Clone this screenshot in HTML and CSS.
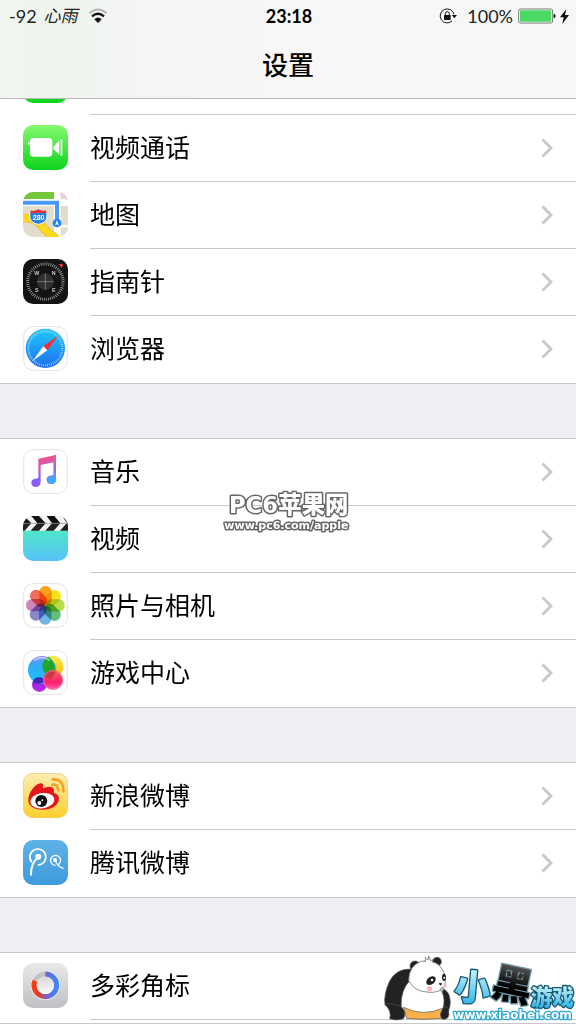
FILE: index.html
```html
<!DOCTYPE html>
<html lang="zh-CN">
<head>
    <meta charset="UTF-8">
    <meta name="viewport" content="width=device-width, initial-scale=1.0">
    <title>设置</title>
    <link rel="stylesheet" href="styles.css">
</head>
<body>
    <svg class="defs" aria-hidden="true">
        <defs>
            <linearGradient id="green" x1="0" y1="0" x2="0" y2="1"><stop offset="0" stop-color="#86f96f"/><stop offset="1" stop-color="#0cd31c"/></linearGradient>
            <linearGradient id="safari" x1="0" y1="0" x2="0" y2="1"><stop offset="0" stop-color="#1fc8f8"/><stop offset="1" stop-color="#1e6ff1"/></linearGradient>
            <linearGradient id="music" x1="0" y1="0" x2="0.2" y2="1"><stop offset="0" stop-color="#ff5265"/><stop offset="0.5" stop-color="#c85bc8"/><stop offset="0.8" stop-color="#7c62ff"/><stop offset="1" stop-color="#a159fb"/></linearGradient>
            <linearGradient id="musicRight" x1="0" y1="0" x2="0" y2="1"><stop offset="0" stop-color="#fb5b70"/><stop offset="0.5" stop-color="#9b6bdc"/><stop offset="0.85" stop-color="#3fa9fb"/></linearGradient>
            <linearGradient id="clap" x1="0" y1="0" x2="0" y2="1"><stop offset="0.3" stop-color="#4ee8c4"/><stop offset="1" stop-color="#57c2fb"/></linearGradient>
            <linearGradient id="bubbleBlue" x1="0" y1="0" x2="0" y2="1"><stop offset="0" stop-color="#8b8cf5"/><stop offset="0.3" stop-color="#35a9fa"/><stop offset="1" stop-color="#17c5fb"/></linearGradient>
            <linearGradient id="bubblePink" x1="0" y1="0" x2="0" y2="1"><stop offset="0" stop-color="#fb6a62"/><stop offset="0.6" stop-color="#fd1f6c"/><stop offset="1" stop-color="#ff5fb4"/></linearGradient>
            <linearGradient id="bubbleYellow" x1="0" y1="0" x2="0" y2="1"><stop offset="0" stop-color="#f5ee5a"/><stop offset="1" stop-color="#f8b500"/></linearGradient>
            <linearGradient id="bubblePurple" x1="0" y1="0" x2="0" y2="1"><stop offset="0" stop-color="#8b22c8"/><stop offset="1" stop-color="#c128fb"/></linearGradient>
            <linearGradient id="sina" x1="0" y1="0" x2="0" y2="1"><stop offset="0" stop-color="#fbeeb4"/><stop offset="1" stop-color="#fecf2b"/></linearGradient>
            <linearGradient id="tencent" x1="0" y1="0" x2="0" y2="1"><stop offset="0" stop-color="#5fb2e6"/><stop offset="1" stop-color="#3f9bdc"/></linearGradient>
            <linearGradient id="silver" x1="0" y1="0" x2="0" y2="1"><stop offset="0" stop-color="#e9e9ea"/><stop offset="1" stop-color="#bfc0c3"/></linearGradient>
            <linearGradient id="ring" x1="0" y1="0" x2="1" y2="0"><stop offset="0" stop-color="#fb3c10"/><stop offset="0.25" stop-color="#d8403c"/><stop offset="0.6" stop-color="#6a6bd8"/><stop offset="1" stop-color="#3f86fb"/></linearGradient>
            <linearGradient id="knob" x1="0" y1="0" x2="0" y2="1"><stop offset="0" stop-color="#d9d9db"/><stop offset="1" stop-color="#fafafa"/></linearGradient>
            <linearGradient id="ice" x1="0" y1="0" x2="0" y2="1"><stop offset="0.2" stop-color="#c8f4ff"/><stop offset="1" stop-color="#1cabe2"/></linearGradient>
            <linearGradient id="coal" x1="0" y1="0" x2="0" y2="1"><stop offset="0.2" stop-color="#555"/><stop offset="0.6" stop-color="#000"/></linearGradient>
            <clipPath id="tile"><rect width="135" height="135" rx="30"/></clipPath>
            <symbol id="chevron" viewBox="0 0 12 20"><path d="M1.500 1.500 10 10 1.500 18.500" fill="none" stroke="#c7c7cc" stroke-width="2.800"/></symbol>
        </defs>
    </svg>

    <div class="screen">
        <header class="topbar">
            <div class="status">
                <div class="status-left">
                    <span class="signal">-92</span>
                    <span class="carrier">心雨</span>
                    <svg class="wifi" width="20" height="16" viewBox="0 0 60 48">
                        <path d="M4 16Q30-7 56 16" fill="none" stroke="#b5b7b5" stroke-width="6"/>
                        <path d="M12 25Q30 9 48 25" fill="none" stroke="#111" stroke-width="7"/>
                        <path d="M19 34Q30 23 41 34L30 45Z" fill="#111"/>
                    </svg>
                </div>
                <time class="clock">23:18</time>
                <div class="status-right">
                    <svg class="lock" width="20" height="16" viewBox="0 0 60 48">
                        <path d="M42 39A21 21 0 1 1 48 19" fill="none" stroke="#111" stroke-width="3"/>
                        <path d="M41 21H57L49 31Z" fill="#111"/>
                        <rect x="18" y="21" width="20" height="15" rx="2" fill="#111"/>
                        <path d="M22 22V17a6 6 0 0 1 12 0v5" fill="none" stroke="#111" stroke-width="3"/>
                    </svg>
                    <span class="percent">100%</span>
                    <svg class="battery" width="38" height="16" viewBox="0 0 114 48">
                        <rect x="2" y="3" width="102" height="42" rx="6" fill="#fff" stroke="#777" stroke-width="3"/>
                        <rect x="6" y="7" width="94" height="34" rx="2" fill="#4cd964"/>
                        <path d="M107 17q6 1 6 7t-6 7z" fill="#111"/>
                    </svg>
                    <svg class="bolt" width="9" height="15" viewBox="0 0 27 45"><path d="M19 0 0 25H11L7 45 27 18H15Z" fill="#111"/></svg>
                </div>
            </div>
            <h1>设置</h1>
        </header>

        <main>
            <ul class="group">
                <li><a href="#" aria-label="信息">
                    <svg class="icon" viewBox="0 0 135 135"><rect width="135" height="135" rx="30" fill="url(#green)"/></svg>
                </a></li>
                <li><a href="#">
                    <svg class="icon" viewBox="0 0 135 135">
                        <rect width="135" height="135" rx="30" fill="url(#green)"/>
                        <rect x="21" y="39" width="67" height="56" rx="10" fill="#fff"/>
                        <path d="M91 65 109 46V89L91 72ZM113 43h5v50h-5z" fill="#fff"/>
                        <rect x="15" y="51" width="5" height="8" rx="2" fill="#fff"/>
                    </svg>
                    <span>视频通话</span>
                    <svg class="chevron"><use href="#chevron"/></svg>
                </a></li>
                <li><a href="#">
                    <svg class="icon" viewBox="0 0 135 135">
                        <g clip-path="url(#tile)">
                            <rect width="135" height="135" fill="#e2dccb"/>
                            <path d="M0 0H93V22H0Z" fill="#76c63b"/>
                            <path d="M0 22H135V42H0ZM93 0h20v135H93Z" fill="#fff"/>
                            <path d="M113 0h22v22h-8a22 22 0 0 0-14-15Z" fill="#f8c3d0"/>
                            <path d="M113 100H135V106H113Z" fill="#fff"/>
                            <path d="M-2 78C45 76 52 98 66 113S88 130 100 142" fill="none" stroke="#e9bd1d" stroke-width="26"/>
                            <path d="M-2 78C45 76 52 98 66 113S88 130 100 142" fill="none" stroke="#ffd91d" stroke-width="21"/>
                            <path d="M0 32H102V92" fill="none" stroke="#fff" stroke-width="20"/>
                            <path d="M0 32H102V92" fill="none" stroke="#4a99fa" stroke-width="12"/>
                        </g>
                        <path d="M24 55q10 3 22-3 12 6 22 3 7 12 3 25-5 14-25 17-20-3-25-17-4-13 3-25Z" fill="#2a80dc" stroke="#fff" stroke-width="3"/>
                        <path d="M24 55q10 3 22-3 12 6 22 3l3 8H21Z" fill="#e13434"/>
                        <text x="47" y="84" class="route">280</text>
                        <circle cx="102" cy="93" r="13" fill="#1682fb"/>
                        <path d="M102 84 108 101 102 97 96 101Z" fill="#fff"/>
                    </svg>
                    <span>地图</span>
                    <svg class="chevron"><use href="#chevron"/></svg>
                </a></li>
                <li><a href="#">
                    <svg class="icon" viewBox="0 0 135 135">
                        <rect width="135" height="135" rx="30" fill="#141414"/>
                        <circle cx="67" cy="68" r="53" fill="none" stroke="#bbb" stroke-width="9" stroke-dasharray="2 4"/>
                        <circle cx="67" cy="68" r="25" fill="#303030"/>
                        <path d="M42 68H92M67 43V93" stroke="#999" stroke-width="2"/>
                        <path d="M107 16 120 14 117 28Z" fill="#f33b30"/>
                        <g class="compass"><text x="41" y="47">W</text><text x="92" y="47">N</text><text x="41" y="99">S</text><text x="92" y="99">E</text></g>
                    </svg>
                    <span>指南针</span>
                    <svg class="chevron"><use href="#chevron"/></svg>
                </a></li>
                <li><a href="#">
                    <svg class="icon" viewBox="0 0 135 135">
                        <rect x="2" y="2" width="131" height="131" rx="29" fill="#fff" stroke="#e3e3e5" stroke-width="3"/>
                        <circle cx="67" cy="67" r="59" fill="url(#safari)"/>
                        <circle cx="67" cy="67" r="51" fill="none" stroke="#b5e3fc" stroke-width="7" stroke-dasharray="2 4"/>
                        <path d="M105 29 61 61 73 73Z" fill="#fb2a30"/>
                        <path d="M29 105 61 61 73 73Z" fill="#fff"/>
                    </svg>
                    <span>浏览器</span>
                    <svg class="chevron"><use href="#chevron"/></svg>
                </a></li>
            </ul>

            <ul class="group">
                <li><a href="#">
                    <svg class="icon" viewBox="0 0 135 135">
                        <rect x="2" y="2" width="131" height="131" rx="29" fill="#fff" stroke="#e3e3e5" stroke-width="3"/>
                        <path d="M46 29 99 18V92C99 101 91 105 84 105S71 99 71 92C71 83 79 80 92 79V40L53 48V98C53 108 46 114 38 114S25 108 25 102C25 92 33 89 46 88Z" fill="url(#music)"/>
                        <path d="M92 19 99 18V92C99 101 91 105 84 105S71 99 71 92C71 83 79 80 92 79Z" fill="url(#musicRight)"/>
                    </svg>
                    <span>音乐</span>
                    <svg class="chevron"><use href="#chevron"/></svg>
                </a></li>
                <li><a href="#">
                    <svg class="icon" viewBox="0 0 135 135">
                        <g clip-path="url(#tile)">
                            <rect width="135" height="135" fill="url(#clap)"/>
                            <rect width="135" height="44" fill="#f4f4f4"/>
                            <path d="M-20 0H3L25 22H0ZM25 0H48L68 22H43ZM71 0H94L112 22H87ZM117 0H140L158 22H133Z" fill="#111"/>
                            <path d="M0 22H25L5 44H-20ZM43 22H68L48 44H23ZM87 22H112L92 44H67ZM131 22H156L136 44H111Z" fill="#222"/>
                            <path d="M0 22H135" stroke="#888" stroke-width="2"/>
                        </g>
                    </svg>
                    <span>视频</span>
                    <svg class="chevron"><use href="#chevron"/></svg>
                </a></li>
                <li><a href="#">
                    <svg class="icon" viewBox="0 0 135 135">
                        <rect x="2" y="2" width="131" height="131" rx="29" fill="#fff" stroke="#e3e3e5" stroke-width="3"/>
                        <g class="petals">
                            <rect x="49" y="9" width="37" height="57" rx="18" fill="#fba11c"/>
                            <rect x="49" y="9" width="37" height="57" rx="18" fill="#f4e21e" transform="rotate(45 67 67)"/>
                            <rect x="49" y="9" width="37" height="57" rx="18" fill="#b9dc4c" transform="rotate(90 67 67)"/>
                            <rect x="49" y="9" width="37" height="57" rx="18" fill="#61bd80" transform="rotate(135 67 67)"/>
                            <rect x="49" y="9" width="37" height="57" rx="18" fill="#75b5e6" transform="rotate(180 67 67)"/>
                            <rect x="49" y="9" width="37" height="57" rx="18" fill="#8a86cc" transform="rotate(225 67 67)"/>
                            <rect x="49" y="9" width="37" height="57" rx="18" fill="#cd87bb" transform="rotate(270 67 67)"/>
                            <rect x="49" y="9" width="37" height="57" rx="18" fill="#f46d5c" transform="rotate(315 67 67)"/>
                        </g>
                    </svg>
                    <span>照片与相机</span>
                    <svg class="chevron"><use href="#chevron"/></svg>
                </a></li>
                <li><a href="#">
                    <svg class="icon" viewBox="0 0 135 135">
                        <rect x="2" y="2" width="131" height="131" rx="29" fill="#fff" stroke="#e3e3e5" stroke-width="3"/>
                        <circle cx="89" cy="49" r="32" fill="url(#bubbleYellow)"/>
                        <circle cx="49" cy="104" r="22" fill="url(#bubblePurple)"/>
                        <circle cx="57" cy="60" r="42" fill="url(#bubbleBlue)"/>
                        <path d="M76 20a32 32 0 0 0-7 53l18 8A42 42 0 0 0 76 20Z" fill="#22a52a"/>
                        <path d="M29 95q5-13 20-13 13 0 20 11-20 15-40 2Z" fill="#4426bd"/>
                        <circle cx="90" cy="90" r="30" fill="url(#bubblePink)"/>
                        <path d="M62 78q9-17 28-17 7 0 9 2-7 17-19 24-9 0-18-9Z" fill="#c63843"/>
                        <path d="M33 31q24-16 48 0" fill="none" stroke="#fff" stroke-opacity="0.500" stroke-width="5"/>
                        <circle cx="90" cy="90" r="28" fill="none" stroke="#ff8b9b" stroke-width="2"/>
                    </svg>
                    <span>游戏中心</span>
                    <svg class="chevron"><use href="#chevron"/></svg>
                </a></li>
            </ul>

            <ul class="group">
                <li><a href="#">
                    <svg class="icon" viewBox="0 0 135 135">
                        <rect x="1" y="1" width="133" height="133" rx="29" fill="url(#sina)" stroke="#e8c35b" stroke-width="2"/>
                        <path d="M16 81C16 58 38 31 53 31Q64 31 59 46 87 35 92 48 94 53 92 60 108 64 108 77C108 96 85 110 58 110 32 110 16 98 16 81Z" fill="#e4161c"/>
                        <ellipse cx="58" cy="83" rx="36" ry="23" fill="#fff" transform="rotate(-8 58 83)"/>
                        <circle cx="55" cy="84" r="18" fill="#111"/>
                        <circle cx="49" cy="90" r="6" fill="#fff"/><circle cx="58" cy="82" r="3" fill="#fff"/>
                        <path d="M88 35q15-3 18 17M89 19q33-2 32 36" fill="none" stroke="#f9a127" stroke-width="8" stroke-linecap="round"/>
                    </svg>
                    <span>新浪微博</span>
                    <svg class="chevron"><use href="#chevron"/></svg>
                </a></li>
                <li><a href="#">
                    <svg class="icon" viewBox="0 0 135 135">
                        <rect width="135" height="135" rx="30" fill="url(#tencent)"/>
                        <g fill="none" stroke="#fff" stroke-linecap="round">
                            <path d="M25 65A24 24 0 1 1 46 75" stroke-width="5"/>
                            <path d="M46 51Q23 70 24 104" stroke-width="6"/>
                            <path d="M108 72A15 15 0 1 0 96 76" stroke-width="4"/>
                            <path d="M97 61Q102 78 120 85" stroke-width="4"/>
                        </g>
                        <circle cx="46" cy="50" r="9" fill="#fff"/><circle cx="96" cy="60" r="6" fill="#fff"/>
                    </svg>
                    <span>腾讯微博</span>
                    <svg class="chevron"><use href="#chevron"/></svg>
                </a></li>
            </ul>

            <ul class="group last">
                <li><a href="#">
                    <svg class="icon" viewBox="0 0 135 135">
                        <rect width="135" height="135" rx="30" fill="url(#silver)"/>
                        <circle cx="67" cy="67" r="44" fill="#f3f3f5"/>
                        <circle cx="67" cy="67" r="34" fill="none" stroke="#c1c2c5" stroke-width="15"/>
                        <path d="M67 33A34 34 0 1 1 36 53" fill="none" stroke="url(#ring)" stroke-width="15"/>
                        <circle cx="67" cy="67" r="26" fill="url(#knob)"/>
                    </svg>
                    <span>多彩角标</span>
                </a></li>
            </ul>
        </main>

        <svg class="mark-center" viewBox="0 0 435 180">
            <g class="outlined">
                <text x="42" y="99" class="mark-latin">PC6</text>
                <text x="190" y="99" class="mark-cjk">苹果网</text>
                <text x="28" y="146" class="mark-url">www.pc6.com/apple</text>
            </g>
        </svg>

        <svg class="mark-corner" viewBox="0 0 600 237">
            <!-- panda -->
            <g stroke="#555" stroke-width="2">
                <path d="M106 72Q60 70 40 110 22 150 27 180 45 190 76 183L100 130Z" fill="#222"/>
                <path d="M202 132Q222 140 223 172 222 200 203 215L180 210Z" fill="#222"/>
                <path d="M100 108Q72 140 76 187 90 219 140 222 190 220 200 195 210 160 196 137Z" fill="#fff"/>
                <path d="M83 187Q140 216 200 190L196 220Q140 226 92 220Z" fill="#f7b04a"/>
                <path d="M27 178Q40 172 75 184 94 205 82 221 62 229 41 221 48 200 27 178Z" fill="#222"/>
                <path d="M204 184Q222 188 218 200 222 220 206 223 192 224 194 205Z" fill="#222"/>
                <circle cx="117" cy="63" r="15" fill="#222"/>
                <circle cx="183" cy="50" r="13" fill="#222"/>
                <path d="M98 107Q98 62 136 49 185 40 204 82 211 107 206 126 188 144 160 142 113 140 98 107Z" fill="#fff"/>
                <path d="M148 51Q150 42 147 38L156 45 158 33 164 47 172 43 168 51" fill="#fff"/>
            </g>
            <ellipse cx="165" cy="107" rx="16" ry="11" fill="#222" transform="rotate(-40 165 107)"/>
            <ellipse cx="204" cy="97" rx="6" ry="11" fill="#222"/>
            <circle cx="168" cy="105" r="4" fill="#fff"/><circle cx="205" cy="98" r="3" fill="#fff"/>
            <path d="M188 115q8-3 11 1l-6 6zM191 130q8 1 12-4" fill="#222"/>
            <circle cx="161" cy="131" r="8" fill="#fcb8b5"/><circle cx="207" cy="123" r="5" fill="#fcb8b5"/>
            <!-- name -->
            <text x="236" y="166" class="logo-big blue" transform="rotate(5 288 125)">小</text>
            <text x="350" y="163" class="logo-huge dark" transform="rotate(12 408 120)">黑</text>
            <text x="464" y="179" class="logo-small blue">游戏</text>
            <text x="232" y="221" class="logo-url">www.xiaohei.com</text>
        </svg>
    </div>
</body>
</html>
```
FILE: styles.css
```css
* {
    box-sizing: border-box;
}
body {
    margin: 0;
    background: #efeff4;
    color: #000;
    font-family: "Noto Sans CJK SC", sans-serif;
}
.defs {
    position: absolute;
    width: 0;
    height: 0;
}
.screen {
    position: relative;
    height: 100vh;
    overflow: hidden;
}

/* status bar and title */
.topbar {
    position: absolute;
    top: 0;
    left: 0;
    right: 0;
    z-index: 1;
    height: 99px;
    border-bottom: 1px solid #b9b9bb;
    background: linear-gradient(90deg, #f3f7f3 0, #edf5ed 7%, #eff4ef 14%, #f5f5f5 24%, #f7f7f7 45%);
}
.status {
    display: grid;
    grid-template-columns: 1fr auto 1fr;
    align-items: center;
    height: 32px;
    padding: 0 7px 0 9px;
    color: #222;
    font-family: Lato, "Noto Sans CJK SC", sans-serif;
    font-size: 18px;
    line-height: 32px;
}
.status-left, .status-right {
    display: flex;
    align-items: center;
}
.status-right {
    justify-content: flex-end;
}
.carrier {
    margin: 0 10px 0 7px;
    font-size: 17px;
    font-style: italic;
}
.clock {
    color: #000;
    font-weight: 700;
}
.lock {
    margin-right: 9px;
}
.battery {
    margin: 0 4px 0 5px;
}
h1 {
    margin: 0;
    font-size: 26px;
    font-weight: 500;
    line-height: 64px;
    text-align: center;
}

/* list */
main {
    display: flex;
    flex-direction: column;
    gap: 54px;
    height: 100%;
    padding-top: 47px;
}
.group {
    flex: none;
    margin: 0;
    padding: 0;
    list-style: none;
    background: #fff;
    border-top: 1px solid #c8c7cc;
    border-bottom: 1px solid #c8c7cc;
}
.group.last {
    flex: 1;
}
.group a {
    display: flex;
    align-items: center;
    position: relative;
    height: 67px;
    padding: 0 23px 2px;
    color: #000;
    font-size: 25px;
    text-decoration: none;
}
.group li:not(:last-child) a::after, .group.last a::after {
    content: "";
    position: absolute;
    left: 90px;
    right: 0;
    bottom: 0;
    height: 1px;
    background: #c8c7cc;
}
.group span {
    padding-bottom: 4px;
}
.icon {
    flex: none;
    width: 45px;
    height: 45px;
    margin-right: 22px;
}
.chevron {
    width: 12px;
    height: 20px;
    margin-left: auto;
}
.route {
    fill: #fff;
    font: 700 21px "Liberation Sans", sans-serif;
    text-anchor: middle;
}
.compass {
    fill: #ccc;
    font: 700 16px "Liberation Sans", sans-serif;
    text-anchor: middle;
}
.petals {
    isolation: isolate;
}
.petals rect {
    mix-blend-mode: multiply;
}

/* watermarks */
.mark-center {
    position: absolute;
    top: 480px;
    left: 50%;
    width: 145px;
    margin-left: -73px;
}
.mark-corner {
    position: absolute;
    right: 0;
    bottom: 0;
    width: 200px;
}
.outlined {
    fill: #fff;
    stroke: #666;
    stroke-width: 9px;
    stroke-linejoin: round;
    paint-order: stroke;
}
.mark-latin {
    font: 700 68px "DejaVu Sans", sans-serif;
}
.mark-cjk {
    font: 900 70px "Noto Sans CJK SC", sans-serif;
}
.mark-url {
    font: 700 33px "DejaVu Sans", sans-serif;
}
.blue, .dark {
    font-family: "Noto Sans CJK SC", sans-serif;
    font-weight: 900;
    stroke: #17576f;
    stroke-width: 8px;
    stroke-linejoin: round;
    paint-order: stroke;
}
.blue {
    fill: url(#ice);
}
.dark {
    fill: url(#coal);
    stroke: #6e97a5;
}
.logo-big {
    font-size: 108px;
}
.logo-huge {
    font-size: 120px;
}
.logo-small {
    font-size: 65px;
}
.logo-url {
    font: 700 36px "DejaVu Sans", sans-serif;
    fill: #fff;
    stroke: #2aa6d2;
    stroke-width: 7px;
    stroke-linejoin: round;
    paint-order: stroke;
}
```
